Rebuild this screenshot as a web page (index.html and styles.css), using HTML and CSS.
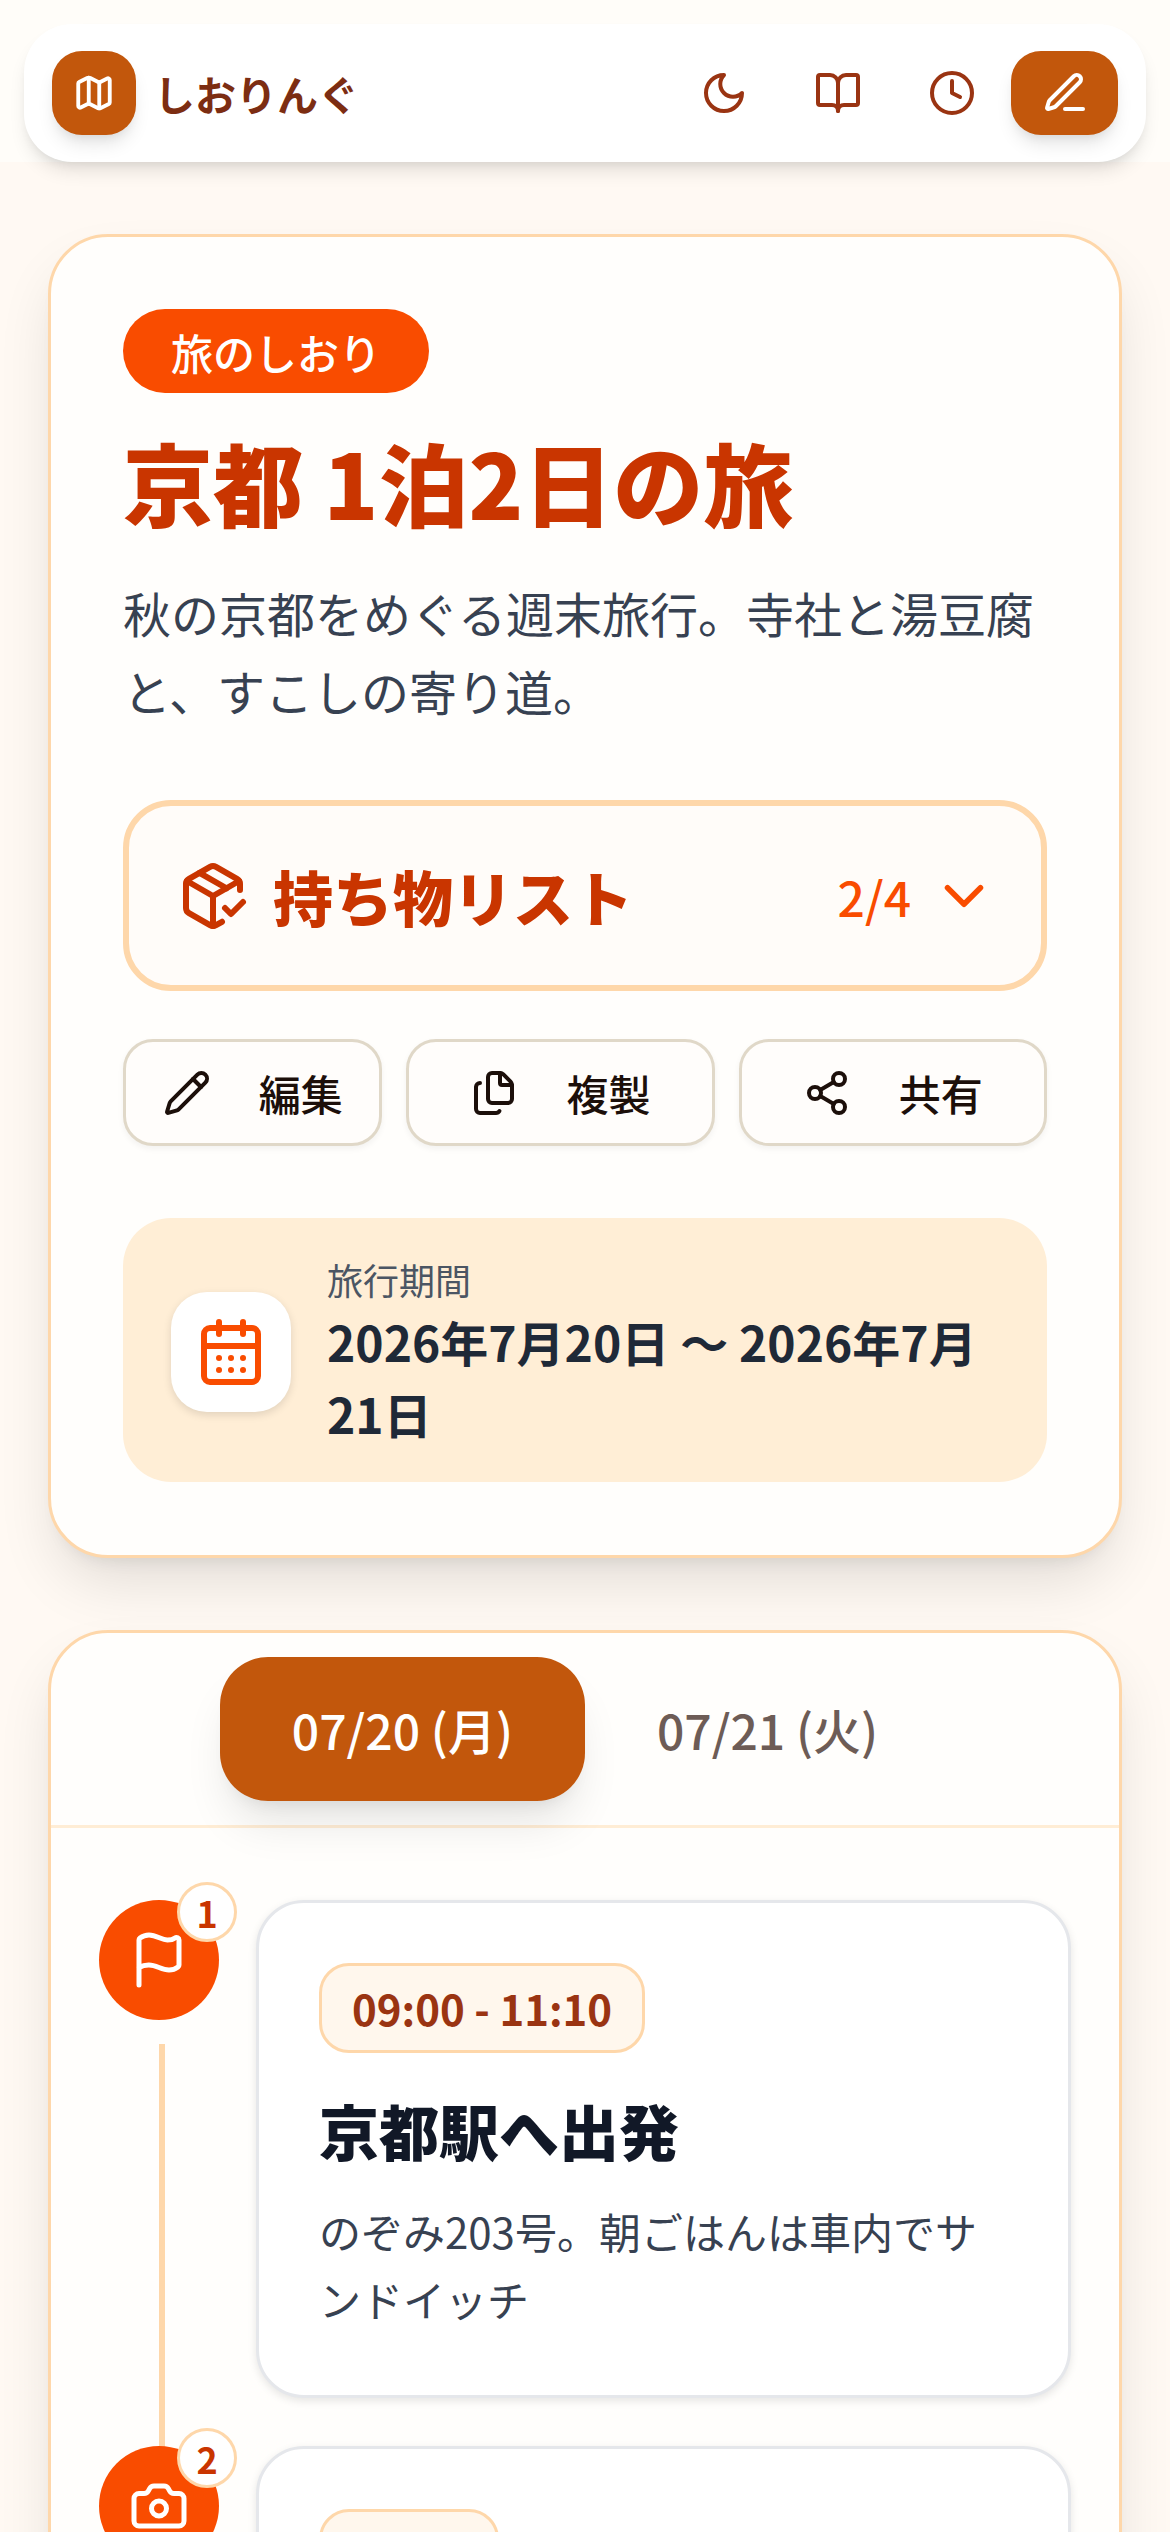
FILE: index.html
```html
<!DOCTYPE html>
<html lang="ja">
  <head>
    <meta charset="UTF-8" />
    <title>しおりんぐ</title>
    <link rel="stylesheet" href="styles.css">
  </head>

  <body>
    <!-- top bar -->
    <div class="topbar">
      <header class="header">
        <div class="logo">
          <svg class="icon icon-42" viewBox="0 0 24 24"><path d="M14.106 5.553a2 2 0 0 0 1.788 0l3.659-1.83A1 1 0 0 1 21 4.619v12.764a1 1 0 0 1-.553.894l-4.553 2.277a2 2 0 0 1-1.788 0l-4.212-2.106a2 2 0 0 0-1.788 0l-3.659 1.83A1 1 0 0 1 3 19.381V6.618a1 1 0 0 1 .553-.894l4.553-2.277a2 2 0 0 1 1.788 0z"/><path d="M15 5.764v15"/><path d="M9 3.236v15"/></svg>
        </div>
        <span class="brand">しおりんぐ</span>
        <nav class="nav">
          <a class="nav-btn"><svg class="icon icon-48" viewBox="0 0 24 24"><path d="M12 3a6 6 0 0 0 9 9 9 9 0 1 1-9-9Z"/></svg></a>
          <a class="nav-btn"><svg class="icon icon-48" viewBox="0 0 24 24"><path d="M12 7v14"/><path d="M3 18a1 1 0 0 1-1-1V4a1 1 0 0 1 1-1h5a4 4 0 0 1 4 4 4 4 0 0 1 4-4h5a1 1 0 0 1 1 1v13a1 1 0 0 1-1 1h-6a3 3 0 0 0-3 3 3 3 0 0 0-3-3z"/></svg></a>
          <a class="nav-btn"><svg class="icon icon-48" viewBox="0 0 24 24"><circle cx="12" cy="12" r="10"/><polyline points="12 6 12 12 16 14"/></svg></a>
          <a class="edit-btn"><svg class="icon icon-48" viewBox="0 0 24 24"><path d="M12 20h9"/><path d="M16.376 3.622a1 1 0 0 1 3.002 3.002L7.368 18.635a2 2 0 0 1-.855.506l-2.872.838a.5.5 0 0 1-.62-.62l.838-2.872a2 2 0 0 1 .506-.854z"/></svg></a>
        </nav>
      </header>
    </div>

    <main class="main">
      <!-- trip summary -->
      <section class="card hero">
        <span class="badge">旅のしおり</span>
        <h1 class="title">京都 1泊2日の旅</h1>
        <p class="desc">秋の京都をめぐる週末旅行。寺社と湯豆腐と、すこしの寄り道。</p>

        <div class="packing">
          <svg class="icon icon-72" viewBox="0 0 24 24"><path d="m16 16 2 2 4-4"/><path d="M21 10V8a2 2 0 0 0-1-1.73l-7-4a2 2 0 0 0-2 0l-7 4A2 2 0 0 0 3 8v8a2 2 0 0 0 1 1.73l7 4a2 2 0 0 0 2 0l2-1.14"/><path d="m7.5 4.27 9 5.15"/><polyline points="3.29 7 12 12 20.71 7"/><line x1="12" y1="22" x2="12" y2="12"/></svg>
          <span class="packing-title">持ち物リスト</span>
          <span class="packing-count">2/4</span>
          <svg class="icon icon-66" viewBox="0 0 24 24"><path d="m6 9 6 6 6-6"/></svg>
        </div>

        <div class="actions">
          <a class="action"><svg class="icon icon-48" viewBox="0 0 24 24"><path d="M21.174 6.812a1 1 0 0 0-3.986-3.987L3.842 16.174a2 2 0 0 0-.5.83l-1.321 4.352a.5.5 0 0 0 .623.622l4.353-1.32a2 2 0 0 0 .83-.497z"/><path d="m15 5 4 4"/></svg>編集</a>
          <a class="action"><svg class="icon icon-48" viewBox="0 0 24 24"><path d="M15 2h-4a2 2 0 0 0-2 2v11a2 2 0 0 0 2 2h8a2 2 0 0 0 2-2V8"/><path d="M16.706 2.706A2.4 2.4 0 0 0 15 2v5a1 1 0 0 0 1 1h5a2.4 2.4 0 0 0-.706-1.706z"/><path d="M5 7a2 2 0 0 0-2 2v11a2 2 0 0 0 2 2h8a2 2 0 0 0 1.732-1"/></svg>複製</a>
          <a class="action"><svg class="icon icon-48" viewBox="0 0 24 24"><circle cx="18" cy="5" r="3"/><circle cx="6" cy="12" r="3"/><circle cx="18" cy="19" r="3"/><line x1="8.59" y1="13.51" x2="15.42" y2="17.49"/><line x1="15.41" y1="6.51" x2="8.59" y2="10.49"/></svg>共有</a>
        </div>

        <div class="period">
          <div class="period-icon">
            <svg class="icon icon-72" viewBox="0 0 24 24"><path d="M8 2v4"/><path d="M16 2v4"/><rect x="3" y="4" width="18" height="18" rx="2"/><path d="M3 10h18"/><path d="M8 14h.01"/><path d="M12 14h.01"/><path d="M16 14h.01"/><path d="M8 18h.01"/><path d="M12 18h.01"/><path d="M16 18h.01"/></svg>
          </div>
          <div>
            <div class="period-label">旅行期間</div>
            <div class="period-value">2026年7月20日 〜 2026年7月21日</div>
          </div>
        </div>
      </section>

      <!-- schedule -->
      <section class="card days">
        <div class="tabs">
          <a class="tab active">07/20 (月)</a>
          <a class="tab">07/21 (火)</a>
        </div>

        <div class="timeline">
          <div class="stop">
            <div class="stop-line"></div>
            <div class="stop-mark">
              <svg class="icon icon-60" viewBox="0 0 24 24"><path d="M4 22V4a1 1 0 0 1 .4-.8A6 6 0 0 1 8 2c3 0 5 2 7.333 2q2 0 3.067-.8A1 1 0 0 1 20 4v10a1 1 0 0 1-.4.8A6 6 0 0 1 16 16c-3 0-5-2-8-2a8 8 0 0 0-4 1"/></svg>
              <span class="stop-num">1</span>
            </div>
            <div class="stop-card">
              <span class="stop-time">09:00 - 11:10</span>
              <h3 class="stop-title">京都駅へ出発</h3>
              <p class="stop-desc">のぞみ203号。朝ごはんは車内でサンドイッチ</p>
            </div>
          </div>

          <div class="stop">
            <div class="stop-mark">
              <svg class="icon icon-60" viewBox="0 0 24 24"><path d="M13.997 4a2 2 0 0 1 1.76 1.05l.486.9A2 2 0 0 0 18.003 7H20a2 2 0 0 1 2 2v9a2 2 0 0 1-2 2H4a2 2 0 0 1-2-2V9a2 2 0 0 1 2-2h1.997a2 2 0 0 0 1.759-1.048l.489-.904A2 2 0 0 1 10.004 4z"/><circle cx="12" cy="13" r="3"/></svg>
              <span class="stop-num">2</span>
            </div>
            <div class="stop-card">
              <span class="stop-time stop-time-cut"></span>
            </div>
          </div>
        </div>
      </section>
    </main>
  </body>
</html>
```

FILE: styles.css
```css
* {
  margin: 0;
  padding: 0;
  box-sizing: border-box;
}
html,
body {
  height: 2532px;
  overflow: hidden;
}
body {
  background-color: #fff9f3;
  font-family: "Noto Sans CJK JP", "Noto Sans", sans-serif;
  color: #1c0f0a;
}
.icon {
  display: block;
  flex: none;
  fill: none;
  stroke: currentColor;
  stroke-width: 2;
  stroke-linecap: round;
  stroke-linejoin: round;
}
.icon-42 { width: 42px; height: 42px; stroke-width: 2.2; }
.icon-48 { width: 48px; height: 48px; }
.icon-60 { width: 60px; height: 60px; }
.icon-66 { width: 66px; height: 66px; }
.icon-72 { width: 72px; height: 72px; }

/* top bar */
.topbar {
  padding: 24px 24px 0;
  background-color: #fffdf9;
}
.header {
  display: flex;
  align-items: center;
  height: 138px;
  padding: 0 28px;
  background-color: #fff;
  border-radius: 48px;
  box-shadow: 0 12px 18px -3px rgba(0, 0, 0, 0.1), 0 6px 12px -6px rgba(0, 0, 0, 0.1);
  position: relative;
}
.logo {
  display: flex;
  align-items: center;
  justify-content: center;
  width: 84px;
  height: 84px;
  border-radius: 30px;
  background-color: #c2570c;
  color: #fff;
  box-shadow: 0 12px 18px -3px rgba(0, 0, 0, 0.1), 0 6px 12px -6px rgba(0, 0, 0, 0.1);
}
.brand {
  margin-left: 18px;
  font-size: 41px;
  font-weight: 700;
  color: #7c2d12;
}
.nav {
  display: flex;
  align-items: center;
  margin-left: auto;
}
.nav-btn {
  display: flex;
  justify-content: center;
  width: 114px;
  color: #9a3412;
}
.edit-btn {
  display: flex;
  align-items: center;
  justify-content: center;
  width: 107px;
  height: 84px;
  margin-left: 2px;
  border-radius: 30px;
  background-color: #c2570c;
  color: #fff;
  box-shadow: 0 12px 18px -3px rgba(0, 0, 0, 0.1), 0 6px 12px -6px rgba(0, 0, 0, 0.1);
}

/* cards */
.main {
  padding: 72px 48px 0;
}
.card {
  background-color: #fffefc;
  border: 3px solid #fed7aa;
  border-radius: 60px;
  box-shadow: 0 30px 60px -9px rgba(0, 0, 0, 0.12), 0 12px 18px -12px rgba(0, 0, 0, 0.1);
}
.hero {
  padding: 72px 72px 73px;
}
.badge {
  display: inline-flex;
  align-items: center;
  height: 84px;
  padding: 0 48px;
  border-radius: 42px;
  background-color: #f94c00;
  color: #fff;
  font-size: 42px;
  font-weight: 500;
}
.title {
  margin-top: 32px;
  font-family: "Noto Sans CJK JP Black", "Noto Sans CJK JP", sans-serif;
  font-size: 90px;
  line-height: 112px;
  font-weight: 900;
  color: #c93500;
}
.desc {
  margin-top: 36px;
  font-size: 48px;
  line-height: 78px;
  color: #374151;
}

/* packing list */
.packing {
  display: flex;
  align-items: center;
  height: 191px;
  margin-top: 71px;
  padding: 0 44px 0 48px;
  border: 6px solid #fed7aa;
  border-radius: 48px;
  background-color: #fffcf9;
  color: #c93500;
}
.packing-title {
  margin-left: 24px;
  font-family: "Noto Sans CJK JP Black", "Noto Sans CJK JP", sans-serif;
  font-size: 60px;
  font-weight: 900;
}
.packing-count {
  margin-left: auto;
  margin-right: 20px;
  font-size: 48px;
  font-weight: 500;
  color: #f94c00;
}
.packing .icon-66 {
  color: #f94c00;
}

/* action buttons */
.actions {
  display: grid;
  grid-template-columns: 259fr 308fr 308fr;
  gap: 24px;
  margin-top: 48px;
}
.action {
  display: flex;
  align-items: center;
  justify-content: center;
  gap: 48px;
  height: 107px;
  border: 3px solid #e0d8c8;
  border-radius: 30px;
  background-color: #fffdfb;
  font-size: 42px;
  font-weight: 500;
  color: #1c0f0a;
  box-shadow: 0 3px 6px rgba(0, 0, 0, 0.05);
}

/* trip period */
.period {
  display: flex;
  align-items: center;
  gap: 36px;
  margin-top: 72px;
  padding: 36px 48px 33px;
  border-radius: 48px;
  background-color: #ffeed6;
}
.period-icon {
  display: flex;
  align-items: center;
  justify-content: center;
  flex: none;
  width: 120px;
  height: 120px;
  border-radius: 36px;
  background-color: #fff;
  color: #f94c00;
  box-shadow: 0 3px 9px rgba(0, 0, 0, 0.12);
}
.period-label {
  font-size: 36px;
  line-height: 51px;
  color: #4b5563;
}
.period-value {
  font-size: 48px;
  line-height: 72px;
  font-weight: 700;
  color: #1f2937;
}

/* schedule */
.days {
  margin-top: 72px;
  height: 1200px;
}
.tabs {
  display: flex;
  justify-content: center;
  padding: 24px;
  border-bottom: 3px solid #ffedd5;
}
.tab {
  padding: 36px 72px;
  border-radius: 48px;
  font-size: 48px;
  line-height: 72px;
  font-weight: 500;
  color: #6d5c56;
}
.tab.active {
  background-color: #c2570c;
  color: #fff;
  box-shadow: 0 30px 45px -9px rgba(0, 0, 0, 0.1), 0 12px 18px -12px rgba(0, 0, 0, 0.1);
}
.timeline {
  padding: 72px 48px 0;
}
.stop {
  display: flex;
  align-items: flex-start;
  gap: 37px;
  padding-bottom: 48px;
  position: relative;
}
/* line between two stops, runs behind the next circle */
.stop-line {
  position: absolute;
  left: 60px;
  top: 144px;
  bottom: -24px;
  width: 6px;
  background-color: #fed7aa;
}
.stop-mark {
  display: flex;
  align-items: center;
  justify-content: center;
  flex: none;
  width: 120px;
  height: 120px;
  border-radius: 50%;
  background-color: #f94c00;
  color: #fff;
  position: relative;
}
.stop-num {
  position: absolute;
  right: -18px;
  top: -18px;
  display: flex;
  align-items: center;
  justify-content: center;
  width: 60px;
  height: 60px;
  border: 3px solid #fed7aa;
  border-radius: 50%;
  background-color: #fff;
  font-size: 36px;
  font-weight: 700;
  color: #c93500;
}
.stop-card {
  flex: 1;
  padding: 60px 60px 62px;
  border: 3px solid #e5e7eb;
  border-radius: 48px;
  background-color: #fff;
  box-shadow: 0 3px 9px rgba(0, 0, 0, 0.1);
}
.stop-time {
  display: inline-block;
  padding: 12px 30px;
  border: 3px solid #fed7aa;
  border-radius: 30px;
  background-color: #fff7ed;
  font-size: 42px;
  line-height: 60px;
  font-weight: 700;
  color: #9a3412;
}
/* second stop: only the top of the pill is inside the window */
.stop-time-cut {
  width: 180px;
  height: 90px;
}
.stop-title {
  margin-top: 32px;
  font-family: "Noto Sans CJK JP Black", "Noto Sans CJK JP", sans-serif;
  font-size: 60px;
  line-height: 90px;
  font-weight: 900;
  color: #111827;
}
.stop-desc {
  margin-top: 22px;
  font-size: 42px;
  line-height: 68px;
  color: #374151;
}
```
